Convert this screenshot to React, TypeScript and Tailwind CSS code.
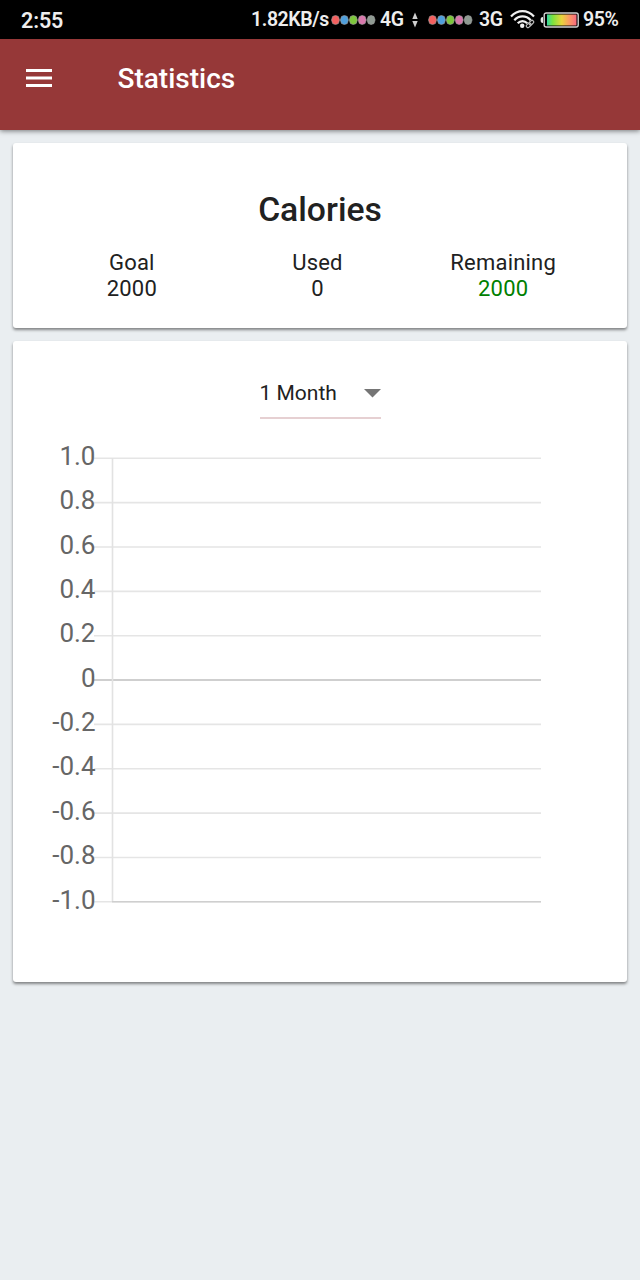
const dotColors = ["#f4605f", "#4f9fdc", "#7dc63c", "#d878ac", "#8f9a92"]

const ticks = ["1.0", "0.8", "0.6", "0.4", "0.2", "0", "-0.2", "-0.4", "-0.6", "-0.8", "-1.0"]

const totals = [
  { label: "Goal", value: "2000", color: "text-[#212121]" },
  { label: "Used", value: "0", color: "text-[#212121]" },
  { label: "Remaining", value: "2000", color: "text-[#008000]" },
]

function SignalDots() {
  return (
    <svg width="45" height="10" viewBox="0 0 45 10">
      {dotColors.map((color, i) => (
        <polygon
          key={color}
          points="4.5,0.4 7.4,1.5 8.5,5 7.4,8.5 4.5,9.6 1.6,8.5 0.5,5 1.6,1.5"
          transform={`translate(${i * 8.9} 0)`}
          fill={color}
          stroke="#a9a9a9"
          strokeWidth="0.6"
        />
      ))}
    </svg>
  )
}

function WifiIcon() {
  return (
    <svg width="25" height="19" viewBox="0 0 25 19" fill="none" stroke="#f1f1f1">
      <path d="M1 6.400C7.500-.600 17.500-.600 24 6.400" strokeWidth="2.200" />
      <path d="M4.300 10.200C9 5.200 16 5.200 20.700 10.200" strokeWidth="2.200" />
      <path d="M7.700 13.300C10.500 10.300 14.500 10.300 17.300 13.300" strokeWidth="2.200" />
      <circle cx="12.200" cy="15.800" r="2.200" fill="#f1f1f1" stroke="none" />
      <g transform="rotate(-45 20 14)" stroke="#bcbcbc" strokeWidth="1.200">
        <rect x="15.500" y="12.400" width="5.200" height="3.200" rx="1.600" />
        <rect x="19.300" y="12.400" width="5.200" height="3.200" rx="1.600" />
      </g>
    </svg>
  )
}

function BatteryIcon() {
  return (
    <svg width="39" height="16" viewBox="0 0 39 16">
      <defs>
        <linearGradient id="charge">
          <stop offset="0" stopColor="#35d6a0" />
          <stop offset="0.2" stopColor="#7de23c" />
          <stop offset="0.5" stopColor="#e8d43c" />
          <stop offset="0.75" stopColor="#fb9a62" />
          <stop offset="1" stopColor="#fa6a80" />
        </linearGradient>
      </defs>
      <path d="M3 5C1 5 .6 6.200.6 8S1 11 3 11z" fill="#e8e8e8" />
      <rect x="4.200" y="1" width="34" height="14" rx="2" fill="none" stroke="#d2d2d2" strokeWidth="1.400" />
      <rect x="7" y="2.500" width="29.500" height="11" fill="url(#charge)" />
    </svg>
  )
}

function StatusBar() {
  return (
    <div className="flex h-[39px] items-center bg-black pl-[21px] text-[19.500px] font-semibold tracking-[-0.400px] text-[#eeeeee]">
      <span className="w-[230px] pt-[3px] text-[21.500px] tracking-[-0.100px]">2:55</span>
      <span className="w-[80px] pt-px">1.82KB/s</span>
      <SignalDots />
      <span className="ml-1 w-[31px] pt-px">4G</span>
      <svg width="8" height="16" viewBox="0 0 8 16" fill="#cfcfcf">
        <path d="M4 0.500L6.700 7H1.300zM4 15.500L6.700 9H1.300z" />
      </svg>
      <span className="ml-[9px] flex">
        <SignalDots />
      </span>
      <span className="ml-1.5 w-[31px] pt-px">3G</span>
      <WifiIcon />
      <span className="ml-[5px] flex">
        <BatteryIcon />
      </span>
      <span className="ml-1 pt-px">95%</span>
    </div>
  )
}

function Chart() {
  return (
    <svg className="block" width="560" height="480" viewBox="0 0 560 480">
      {ticks.map((tick, i) => {
        const y = 18.300 + i * 44.350
        return (
          <g key={tick}>
            <line
              x1="54"
              x2="501"
              y1={y}
              y2={y}
              stroke={tick === "0" ? "#bfbfbf" : "#e5e5e5"}
              strokeWidth="1.600"
            />
            <text x="55.500" y={y + 6.700} textAnchor="end" fontSize="26" fill="#666666">
              {tick}
            </text>
          </g>
        )
      })}
      <line x1="72.500" x2="72.500" y1="18" y2="462" stroke="#e2e2e2" strokeWidth="1.600" />
      <line x1="72" x2="501" y1="461.800" y2="461.800" stroke="#cfcfcf" strokeWidth="1.600" />
    </svg>
  )
}

export default function App() {
  return (
    <div className="min-h-screen bg-[#eaeef1] font-['Roboto',sans-serif] text-[#212121]">
      <StatusBar />

      <header className="flex h-[91px] items-center bg-[#963838] pb-3.5 pl-[26px] text-white shadow-[0_1px_5px_rgba(0,0,0,0.500)]">
        <svg width="26" height="18" viewBox="0 0 26 18" fill="currentColor">
          <path d="M0 0h26v3H0zM0 7.500h26v3H0zM0 15h26v3H0z" />
        </svg>
        <h1 className="ml-[65.500px] pt-[2px] text-[28px] font-medium">Statistics</h1>
      </header>

      <main className="flex flex-col gap-[13px] p-[13px]">
        <section className="h-[185px] rounded-[3px] bg-white pt-[46px] shadow-[0_2px_3px_rgba(0,0,0,0.450)]">
          <h2 className="text-center text-[33.700px] leading-[42px] font-medium">Calories</h2>
          <div className="mt-[19px] grid grid-cols-3 pr-[31px] pl-[26px] text-center text-[22px] leading-[26px] tracking-[0.200px]">
            {totals.map((item) => (
              <div key={item.label}>
                <div>{item.label}</div>
                <div className={item.color}>{item.value}</div>
              </div>
            ))}
          </div>
        </section>

        <section className="h-[641px] rounded-[3px] bg-white pt-[38px] shadow-[0_2px_3px_rgba(0,0,0,0.450)]">
          <div className="mx-auto flex h-[40px] w-[121px] justify-between border-b-2 border-[#e6d0d2] text-[21px] leading-[28px]">
            <span>1 Month</span>
            <svg className="mt-[9.500px]" width="17" height="9" viewBox="0 0 17 9" fill="#757575">
              <path d="M0 0h17L8.500 8.500z" />
            </svg>
          </div>
          <div className="mt-[21px] pl-[27px]">
            <Chart />
          </div>
        </section>
      </main>
    </div>
  )
}
